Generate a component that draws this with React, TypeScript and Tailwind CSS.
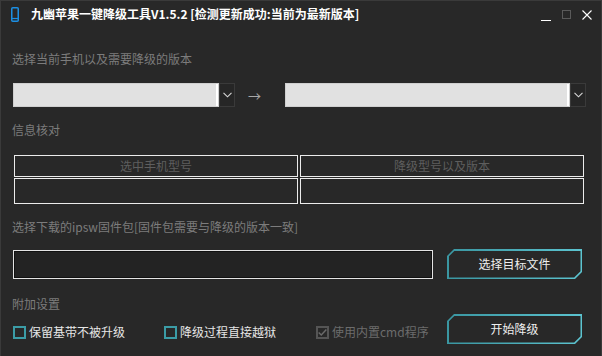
import React from "react";

const FONT = { fontFamily: '"Noto Sans CJK SC", "Noto Sans", sans-serif' };

function PhoneIcon() {
  return (
    <svg width="8" height="15" viewBox="0 0 8 15" fill="none">
      <rect x="0.75" y="0.75" width="6.5" height="13.5" rx="1" stroke="#1c8fe3" strokeWidth="1.5" />
      <line x1="1" y1="11.5" x2="7" y2="11.5" stroke="#1c8fe3" strokeWidth="1.2" />
    </svg>
  );
}

function Chevron() {
  return (
    <svg width="9" height="6" viewBox="0 0 9 6" fill="none">
      <path d="M0.5 0.8 L4.5 4.8 L8.5 0.8" stroke="#d8d8d8" strokeWidth="1.1" />
    </svg>
  );
}

function Combo({ width }: { width: string }) {
  return (
    <div className="flex h-[24px]">
      <div className={`${width} h-full border border-[#cfcfcf]`}>
        <div className="h-full w-full border-r-2 border-white bg-[#e1e1e1]" />
      </div>
      <div className="flex h-full w-[16px] items-center justify-center border border-[#3a3a3a] bg-[#262626]">
        <Chevron />
      </div>
    </div>
  );
}

function ChamferButton({ label }: { label: string }) {
  return (
    <div className="h-[30px] w-[135px] bg-gradient-to-r from-[#3a96a1] to-[#5cc4d0] p-[1.5px] [clip-path:polygon(7px_0,100%_0,100%_calc(100%_-_7px),calc(100%_-_7px)_100%,0_100%,0_7px)]">
      <div className="flex h-full w-full items-center justify-center bg-[#282828] text-[12px] text-[#eeeeee] [clip-path:polygon(6.3px_0,100%_0,100%_calc(100%_-_6.3px),calc(100%_-_6.3px)_100%,0_100%,0_6.3px)]">
        {label}
      </div>
    </div>
  );
}

function Check({ label, checked, disabled }: { label: string; checked?: boolean; disabled?: boolean }) {
  return (
    <div className="flex items-center gap-[3px]">
      <div
        className={`flex h-[13px] w-[13px] items-center justify-center border-2 ${
          disabled ? "border-[#555555]" : "border-[#3b9ca6]"
        }`}
      >
        {checked ? (
          <svg width="11" height="9" viewBox="0 0 11 9" fill="none">
            <path d="M0.8 4.5 L4 7.6 L10.2 0.8" stroke="#6a6a6a" strokeWidth="1.8" />
          </svg>
        ) : null}
      </div>
      <span className={`text-[12px] leading-[16px] ${disabled ? "text-[#6c6c6c]" : "text-[#e6e6e6]"}`}>{label}</span>
    </div>
  );
}

export default function App() {
  return (
    <div
      className="flex h-[356px] w-[602px] flex-col overflow-hidden border border-b-0 border-[#3a3a3a] bg-[#282828]"
      style={FONT}
    >
      {/* title bar */}
      <div className="flex h-[26px] items-center pl-[10px] pr-[9px]">
        <PhoneIcon />
        <span className="ml-[12px] text-[12px] font-bold leading-none text-white">
          九幽苹果一键降级工具V1.5.2 [检测更新成功:当前为最新版本]
        </span>
        <div className="ml-auto flex items-center gap-[11px] pt-[1px]">
          <div className="mt-[12px] h-[1.5px] w-[10px] bg-white" />
          <div className="h-[9px] w-[9px] border border-[#5a5a5a]" />
          <svg width="10" height="10" viewBox="0 0 10 10" fill="none">
            <path d="M0.5 0.5 L9.5 9.5 M9.5 0.5 L0.5 9.5" stroke="#ffffff" strokeWidth="1.1" />
          </svg>
        </div>
      </div>

      <div className="flex flex-col pl-[11px]">
        <div className="mt-[24px] text-[12px] leading-[16px] text-[#7c7c7c]">选择当前手机以及需要降级的版本</div>

        <div className="ml-px mt-[16px] flex items-center">
          <Combo width="w-[206px]" />
          <span className="ml-[13px] w-[37px] text-[13px] leading-none text-[#a8a8a8]">→</span>
          <Combo width="w-[285px]" />
        </div>

        <div className="mt-[15px] text-[12px] leading-[16px] text-[#7c7c7c]">信息核对</div>

        <div className="ml-[2px] mt-[17px] grid w-[570px] grid-cols-2 gap-x-[2px] gap-y-[1px]">
          <div className="flex h-[22px] items-center justify-center border border-[#ececec] text-[12px] text-[#5e5e5e]">
            选中手机型号
          </div>
          <div className="flex h-[22px] items-center justify-center border border-[#ececec] text-[12px] text-[#5e5e5e]">
            降级型号以及版本
          </div>
          <div className="h-[26px] border border-[#ececec]" />
          <div className="h-[26px] border border-[#ececec]" />
        </div>

        <div className="mt-[15px] text-[12px] leading-[16px] text-[#7c7c7c]">
          选择下载的ipsw固件包[固件包需要与降级的版本一致]
        </div>

        <div className="ml-px mt-[14px] flex items-center">
          <div className="mt-px h-[29px] w-[420px] border border-[#e4e4e4]">
            <div className="h-full w-full border border-[#111111] bg-[#232323]" />
          </div>
          <div className="ml-[14px]">
            <ChamferButton label="选择目标文件" />
          </div>
        </div>

        <div className="mt-[17px] text-[12px] leading-[16px] text-[#7c7c7c]">附加设置</div>

        <div className="ml-px mt-[2px] flex items-start">
          <div className="mt-[10px] w-[151px]">
            <Check label="保留基带不被升级" />
          </div>
          <div className="mt-[10px] w-[152px]">
            <Check label="降级过程直接越狱" />
          </div>
          <div className="mt-[10px] w-[131px]">
            <Check label="使用内置cmd程序" checked disabled />
          </div>
          <ChamferButton label="开始降级" />
        </div>
      </div>
    </div>
  );
}
